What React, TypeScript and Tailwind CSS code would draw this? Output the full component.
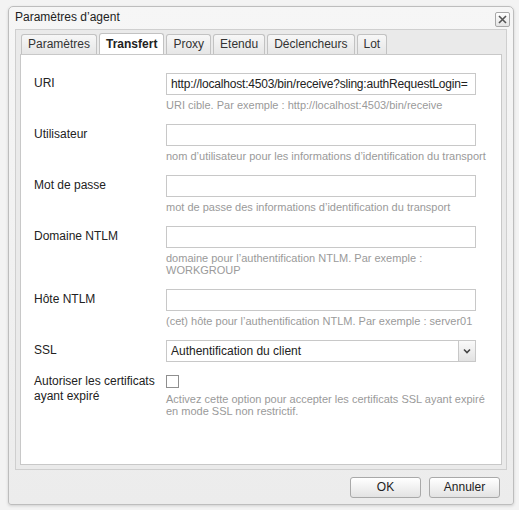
import { useState } from 'react'

const fieldInput =
  'h-[22px] w-[310px] border border-[#c8c8c8] bg-white px-[4px] text-[12px] tracking-[-0.2px] text-[#222] outline-none'

function Field({ label, hint, children }: { label: string; hint?: string[]; children: React.ReactNode }) {
  return (
    <div className="flex">
      <div className="w-[132px] shrink-0 pt-[3px] text-[12px] leading-[15px] text-[#222]">{label}</div>
      <div className="flex flex-col">
        {children}
        {hint && (
          <div className="mt-[4px] text-[11px] leading-[12px] text-[#9a9a9a]">
            {hint.map((h, i) => (
              <div key={i}>{h}</div>
            ))}
          </div>
        )}
      </div>
    </div>
  )
}

const tabs = ['Paramètres', 'Transfert', 'Proxy', 'Etendu', 'Déclencheurs', 'Lot']

export default function App() {
  const [active, setActive] = useState('Transfert')
  const [checked, setChecked] = useState(false)

  return (
    <div
      className="h-[510px] w-[519px] overflow-hidden bg-[#f3f3f3] px-[8px] pt-[6px]"
      style={{ fontFamily: '"Liberation Sans", Arial, sans-serif' }}
    >
      <div className="flex h-[499px] w-[506px] flex-col rounded-t-[5px] rounded-b-[3px] border border-[#bdbdbd] bg-gradient-to-b from-[#f6f6f6] to-[#ececec] shadow-[0_1px_3px_rgba(0,0,0,0.15)]">
        {/* title bar */}
        <div className="flex h-[22px] items-start justify-between pl-[6px] pr-[3px]">
          <span className="mt-[3px] text-[12px] leading-[15px] text-[#222]">Paramètres d’agent</span>
          <button className="mt-[5px] flex h-[15px] w-[15px] items-center justify-center rounded-[2px] border border-[#a8a8a8] bg-gradient-to-b from-white to-[#e4e4e4]">
            <svg width="9" height="9" viewBox="0 0 9 9">
              <path d="M1 1L8 8M8 1L1 8" stroke="#555" strokeWidth="1.6" />
            </svg>
          </button>
        </div>

        {/* tab panel */}
        <div className="mx-[6px] flex h-[441px] flex-col border border-[#cfcfcf] bg-[#eaeaea] px-[4px] pb-[4px]">
          <div className="flex h-[24px] items-end gap-[2px] pl-[1px]">
            {tabs.map(t => {
              const on = t === active
              return (
                <button
                  key={t}
                  onClick={() => setActive(t)}
                  className={
                    'rounded-t-[3px] border border-b-0 border-[#c2c2c2] px-[6px] text-[12px] leading-[19px] ' +
                    (on
                      ? 'h-[21px] bg-white font-bold text-[#222]'
                      : 'h-[20px] bg-gradient-to-b from-[#f7f7f7] to-[#e6e6e6] text-[#333]')
                  }
                >
                  {t}
                </button>
              )
            })}
          </div>
          <div className="flex flex-1 flex-col gap-[13px] border border-[#c8c8c8] bg-white pl-[13px] pt-[18px]">
            <Field label="URI" hint={['URI cible. Par exemple : http://localhost:4503/bin/receive']}>
              <input className={fieldInput} defaultValue="http://localhost:4503/bin/receive?sling:authRequestLogin=" />
            </Field>
            <Field label="Utilisateur" hint={["nom d’utilisateur pour les informations d’identification du transport"]}>
              <input className={fieldInput} />
            </Field>
            <Field label="Mot de passe" hint={['mot de passe des informations d’identification du transport']}>
              <input type="password" className={fieldInput} />
            </Field>
            <Field
              label="Domaine NTLM"
              hint={['domaine pour l’authentification NTLM. Par exemple :', 'WORKGROUP']}
            >
              <input className={fieldInput} />
            </Field>
            <Field label="Hôte NTLM" hint={['(cet) hôte pour l’authentification NTLM. Par exemple : server01']}>
              <input className={fieldInput} />
            </Field>
            <Field label="SSL">
              <div className="flex h-[22px] w-[310px] border border-[#c8c8c8] bg-white">
                <span className="flex-1 px-[4px] text-[12px] leading-[20px] text-[#222]">Authentification du client</span>
                <span className="flex w-[17px] items-center justify-center border-l border-[#c8c8c8] bg-gradient-to-b from-[#fafafa] to-[#e2e2e2]">
                  <svg width="8" height="6" viewBox="0 0 8 6">
                    <path d="M1 1.5L4 4.5L7 1.5" stroke="#444" strokeWidth="1.6" fill="none" />
                  </svg>
                </span>
              </div>
            </Field>
            <div className="-mt-[1px] flex">
              <div className="w-[132px] shrink-0 text-[12px] leading-[15px] text-[#222]">
                Autoriser les certificats
                <br />
                ayant expiré
              </div>
              <div className="flex flex-col pt-[1px]">
                <button
                  onClick={() => setChecked(!checked)}
                  className="flex h-[13px] w-[13px] items-center justify-center border border-[#8f8f8f] bg-white"
                >
                  {checked && (
                    <svg width="9" height="9" viewBox="0 0 9 9">
                      <path d="M1 4.5L3.5 7L8 1.5" stroke="#333" strokeWidth="1.5" fill="none" />
                    </svg>
                  )}
                </button>
                <div className="mt-[5px] text-[11px] leading-[12px] text-[#9a9a9a]">
                  <div>Activez cette option pour accepter les certificats SSL ayant expiré</div>
                  <div>en mode SSL non restrictif.</div>
                </div>
              </div>
            </div>
          </div>
        </div>

        {/* footer */}
        <div className="flex flex-1 items-center justify-end gap-[8px] pr-[13px]">
          <button className="h-[21px] w-[71px] rounded-[3px] border border-[#a9a9a9] bg-gradient-to-b from-white to-[#e3e3e3] text-[12px] text-[#222]">
            OK
          </button>
          <button className="h-[21px] w-[71px] rounded-[3px] border border-[#a9a9a9] bg-gradient-to-b from-white to-[#e3e3e3] text-[12px] text-[#222]">
            Annuler
          </button>
        </div>
      </div>
    </div>
  )
}
